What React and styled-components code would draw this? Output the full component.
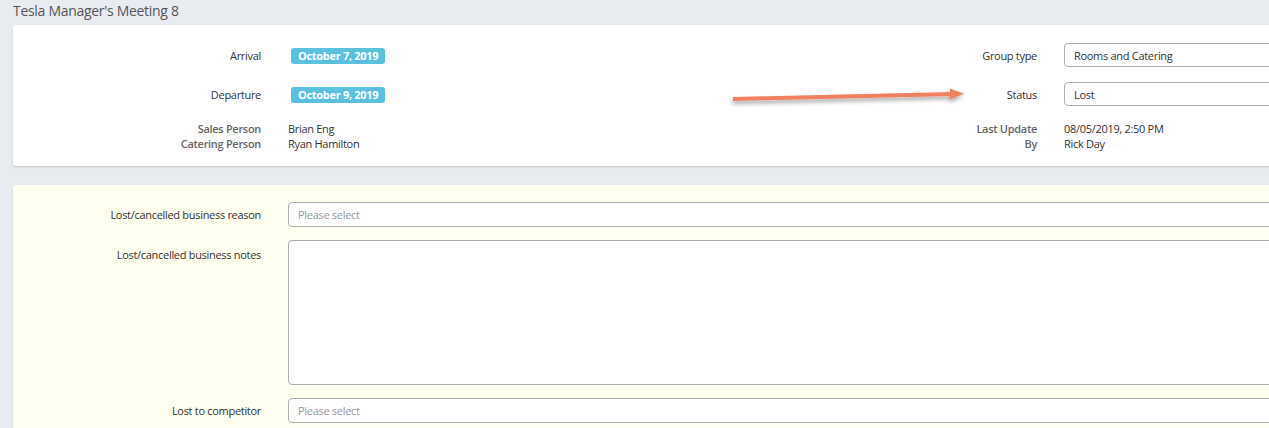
import React from "react";
import styled, { createGlobalStyle } from "styled-components";

const Global = createGlobalStyle`
  html, body { margin: 0; padding: 0; }
  body {
    background: #e8ecf1;
    font-family: "Open Sans", "Noto Sans", sans-serif;
    font-size: 11px;
    letter-spacing: -0.3px;
    color: #333;
    overflow: hidden;
  }
`;

const Page = styled.div`
  padding: 2px 0 0 13px;
  width: 1600px;
`;

const Title = styled.h1`
  margin: 0;
  height: 23px;
  font-size: 14px;
  font-weight: 400;
  color: #555;
  line-height: 17px;
`;

const Card = styled.section`
  position: relative;
  background: ${(p) => (p.$tint ? "#fffff0" : "#fff")};
  border-radius: 3px;
  box-shadow: 0 1px 2px rgba(0, 0, 0, 0.18);
  padding: ${(p) => p.$pad};
  margin-bottom: 19px;
`;

const Grid = styled.div`
  display: grid;
  grid-template-columns: 248px 400px 322px 400px;
  column-gap: 27px;
  row-gap: 15px;
  align-items: center;
`;

const Info = styled.div`
  grid-column: ${(p) => p.$col};
  display: contents;
`;

const Label = styled.div`
  text-align: right;
  color: ${(p) => (p.$muted ? "#666" : "#333")};
  font-weight: ${(p) => (p.$muted ? 600 : 400)};
  line-height: 15px;
  align-self: ${(p) => p.$self || "auto"};
  padding-top: ${(p) => p.$top || "0"};
`;

const Value = styled.div`
  color: #333;
  line-height: 15px;
`;

const Badge = styled.span`
  display: inline-block;
  margin-left: 3px;
  background: #5bc0de;
  color: #fff;
  font-weight: 700;
  font-size: 11px;
  line-height: 16px;
  padding: 0 7px;
  border-radius: 3px;
  vertical-align: middle;
`;

const Select = styled.div`
  box-sizing: border-box;
  height: ${(p) => p.$h || "24px"};
  width: 100%;
  border: 1px solid #adadad;
  border-radius: 4px;
  background: #fff;
  padding: 0 9px;
  display: flex;
  align-items: ${(p) => (p.$area ? "flex-start" : "center")};
  color: ${(p) => (p.$placeholder ? "#999" : "#333")};
`;

const Form = styled.div`
  display: grid;
  grid-template-columns: 248px 1200px;
  column-gap: 27px;
  row-gap: 13px;
  align-items: center;
`;

const Arrow = styled.svg`
  position: absolute;
  left: 720px;
  top: 59px;
  overflow: visible;
  pointer-events: none;
`;

export default function App() {
  return (
    <>
      <Global />
      <Page>
        <Title>Tesla Manager's Meeting 8</Title>
        <Card $pad="18px 0 15px">
          <Grid>
            <Label>Arrival</Label>
            <Value>
              <Badge>October 7, 2019</Badge>
            </Value>
            <Label>Group type</Label>
            <Select>Rooms and Catering</Select>

            <Label>Departure</Label>
            <Value>
              <Badge>October 9, 2019</Badge>
            </Value>
            <Label>Status</Label>
            <Select>Lost</Select>

            <Label $muted>
              Sales Person
              <br />
              Catering Person
            </Label>
            <Value>
              Brian Eng
              <br />
              Ryan Hamilton
            </Value>
            <Label $muted>
              Last Update
              <br />
              By
            </Label>
            <Value>
              08/05/2019, 2:50 PM
              <br />
              Rick Day
            </Value>
          </Grid>
          <Arrow width="260" height="60" viewBox="0 0 260 60">
            <defs>
              <filter id="sh" x="-10%" y="-100%" width="120%" height="400%">
                <feDropShadow dx="-1" dy="3" stdDeviation="2" floodColor="#000" floodOpacity="0.35" />
              </filter>
            </defs>
            <g filter="url(#sh)">
              <line x1="0" y1="15" x2="220" y2="10" stroke="#f0805e" strokeWidth="4" />
              <polygon points="217,4.5 231,9.7 217,15.2" fill="#f0805e" />
            </g>
          </Arrow>
        </Card>
        <Card $tint $pad="17px 0 20px">
          <Form>
            <Label>Lost/cancelled business reason</Label>
            <Select $placeholder $h="25px">Please select</Select>

            <Label $self="start" $top="7px">Lost/cancelled business notes</Label>
            <Select $area $h="145px" />

            <Label>Lost to competitor</Label>
            <Select $placeholder $h="25px">Please select</Select>
          </Form>
        </Card>
      </Page>
    </>
  );
}
